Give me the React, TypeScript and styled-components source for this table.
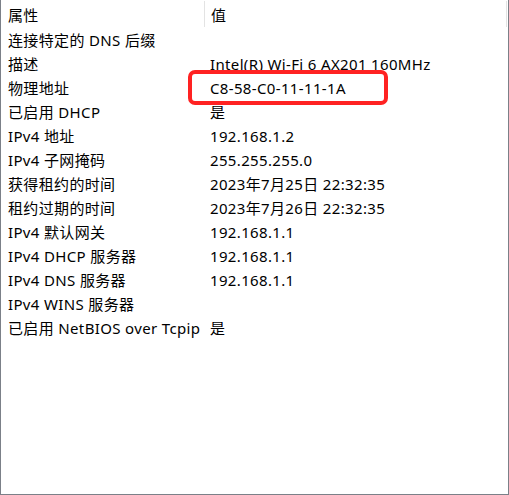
import React from "react";
import styled, { createGlobalStyle } from "styled-components";

const Global = createGlobalStyle`
  html, body { margin: 0; padding: 0; background: #fff; }
  body { font-family: "Noto Sans", "Noto Sans CJK SC", sans-serif; }
`;

const Frame = styled.div`
  position: relative;
  box-sizing: border-box;
  width: 509px;
  height: 495px;
  background: #fff;
  border-left: 1px solid #7b8088;
  border-right: 1px solid #7b8088;
  border-bottom: 1px solid #7b8088;
  color: #000;
  font-size: 15px;
  letter-spacing: 0.35px;
`;

const Header = styled.div`
  display: grid;
  grid-template-columns: 203px 1fr;
  height: 28px;
  padding-top: 1px;
  box-sizing: border-box;
`;

const HeadCell = styled.div<{ $divider?: boolean }>`
  display: flex;
  align-items: center;
  height: 26px;
  padding-left: ${(p) => (p.$divider ? "6px" : "7px")};
  border-left: ${(p) => (p.$divider ? "1px solid #e3e3e3" : "none")};
  border-right: ${(p) => (p.$divider ? "1px solid #e3e3e3" : "none")};
  margin-right: ${(p) => (p.$divider ? "1px" : "0")};
`;

const Row = styled.div`
  display: grid;
  grid-template-columns: 209px 1fr;
  height: 24px;
  align-items: center;
  white-space: nowrap;
`;

const Cell = styled.div<{ $first?: boolean }>`
  padding-left: ${(p) => (p.$first ? "7px" : "0")};
  line-height: 24px;
`;

const Highlight = styled.div`
  position: absolute;
  left: 187px;
  top: 70px;
  width: 200px;
  height: 35px;
  box-sizing: border-box;
  border: 4px solid #ff2222;
  border-radius: 7px;
  pointer-events: none;
`;

const rows: [string, string][] = [
  ["连接特定的 DNS 后缀", ""],
  ["描述", "Intel(R) Wi-Fi 6 AX201 160MHz"],
  ["物理地址", "C8-58-C0-11-11-1A"],
  ["已启用 DHCP", "是"],
  ["IPv4 地址", "192.168.1.2"],
  ["IPv4 子网掩码", "255.255.255.0"],
  ["获得租约的时间", "2023年7月25日 22:32:35"],
  ["租约过期的时间", "2023年7月26日 22:32:35"],
  ["IPv4 默认网关", "192.168.1.1"],
  ["IPv4 DHCP 服务器", "192.168.1.1"],
  ["IPv4 DNS 服务器", "192.168.1.1"],
  ["IPv4 WINS 服务器", ""],
  ["已启用 NetBIOS over Tcpip", "是"],
];

export default function App() {
  return (
    <>
      <Global />
      <Frame>
        <Header>
          <HeadCell>属性</HeadCell>
          <HeadCell $divider>值</HeadCell>
        </Header>
        {rows.map(([k, v]) => (
          <Row key={k}>
            <Cell $first>{k}</Cell>
            <Cell>{v}</Cell>
          </Row>
        ))}
        <Highlight />
      </Frame>
    </>
  );
}
